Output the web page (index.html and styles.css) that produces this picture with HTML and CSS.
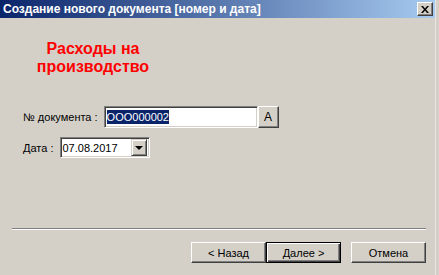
FILE: index.html
```html
<!DOCTYPE html>
<html lang="ru">
<head>
  <meta charset="UTF-8">
  <title>Создание нового документа</title>
  <link rel="stylesheet" href="styles.css">
</head>
<body>
  <div class="window">
    <div class="titlebar">
      <span class="title">Создание нового документа [номер и дата]</span>
      <span class="close-btn">
        <svg width="8" height="7" viewBox="0 0 8 7"><path d="M0 0h2l2 2.5L6 0h2L5 3.5 8 7H6L4 4.5 2 7H0l3-3.5z" fill="#000"/></svg>
      </span>
    </div>
    <div class="content">
      <div class="heading">Расходы на<br>производство</div>
      <div class="form-row doc-row">
        <label class="label">№ документа :</label>
        <div class="field doc-field"><span class="selected">OOO000002</span></div>
        <button class="btn small-btn">A</button>
      </div>
      <div class="form-row date-row">
        <label class="label">Дата :</label>
        <div class="field combo">
          <span class="combo-text">07.08.2017</span>
          <span class="combo-btn"><span class="arrow"></span></span>
        </div>
      </div>
      <div class="spacer"></div>
      <div class="separator"></div>
      <div class="buttons">
        <button class="btn wiz-btn">&lt; Назад</button>
        <button class="btn wiz-btn default">Далее &gt;</button>
        <button class="btn wiz-btn cancel">Отмена</button>
      </div>
    </div>
  </div>
</body>
</html>
```

FILE: styles.css
```css
html, body {
  margin: 0;
  padding: 0;
}
body {
  width: 439px;
  height: 275px;
  background: #d4d0c8;
  font-family: 'Liberation Sans', Arial, sans-serif;
  font-size: 11px;
  color: #000;
  overflow: hidden;
}
.window {
  width: 435px;
  height: 275px;
  display: flex;
  flex-direction: column;
  border-right: 1px solid #e8e6e2;
}
.titlebar {
  height: 18px;
  display: flex;
  align-items: center;
  justify-content: space-between;
  padding: 0 2px 0 3px;
  background: linear-gradient(to right, #0a246a, #a6caf0);
}
.title {
  color: #fff;
  font-weight: bold;
  font-size: 12px;
  white-space: nowrap;
}
.close-btn {
  width: 14px;
  height: 12px;
  display: flex;
  align-items: center;
  justify-content: center;
  background: #d4d0c8;
  border: 1px solid;
  border-color: #fff #404040 #404040 #fff;
  box-shadow: inset -1px -1px #808080;
}
.content {
  flex: 1;
  display: flex;
  flex-direction: column;
  padding: 0 9px 12px 12px;
}
.heading {
  width: 162px;
  margin-top: 22px;
  text-align: center;
  color: #ff0000;
  font-weight: bold;
  font-size: 16px;
  line-height: 18px;
}
.form-row {
  display: flex;
  align-items: center;
  padding-left: 11px;
}
.doc-row {
  margin-top: 30px;
}
.date-row {
  margin-top: 9px;
}
.label {
  margin-right: 6px;
  font-size: 11px;
}
.date-row .label {
  margin-right: 7px;
}
.field {
  box-sizing: border-box;
  background: #fff;
  border: 1px solid;
  border-color: #808080 #fff #fff #808080;
  box-shadow: inset 1px 1px #404040, inset -1px -1px #d4d0c8;
  display: flex;
  align-items: center;
}
.doc-field {
  width: 154px;
  height: 22px;
  padding-left: 2px;
}
.selected {
  background: #0a246a;
  color: #fff;
  font-size: 11px;
  line-height: 14px;
}
.btn {
  box-sizing: border-box;
  background: #d4d0c8;
  border: 1px solid;
  border-color: #fff #404040 #404040 #fff;
  box-shadow: inset -1px -1px #808080;
  font-family: 'Liberation Sans', Arial, sans-serif;
  font-size: 11px;
  color: #000;
  padding: 0;
}
.small-btn {
  width: 21px;
  height: 22px;
  font-size: 12px;
}
.combo {
  width: 90px;
  height: 21px;
  padding: 2px 2px 2px 1px;
  justify-content: space-between;
}
.combo-text {
  font-size: 11px;
}
.combo-btn {
  box-sizing: border-box;
  width: 16px;
  height: 17px;
  background: #d4d0c8;
  border: 1px solid;
  border-color: #d4d0c8 #404040 #404040 #d4d0c8;
  box-shadow: inset 1px 1px #fff, inset -1px -1px #808080;
  display: flex;
  align-items: center;
  justify-content: center;
}
.arrow {
  width: 0;
  height: 0;
  border-left: 4px solid transparent;
  border-right: 4px solid transparent;
  border-top: 4px solid #000;
}
.spacer {
  flex: 1;
}
.separator {
  width: 414px;
  height: 1px;
  background: #808080;
  border-bottom: 1px solid #fff;
}
.buttons {
  display: flex;
  justify-content: flex-end;
  margin-top: 12px;
}
.wiz-btn {
  width: 75px;
  height: 21px;
}
.default {
  border-color: #000;
  box-shadow: inset 1px 1px #fff, inset -1px -1px #404040, inset -2px -2px #808080;
}
.cancel {
  margin-left: 10px;
}
```
